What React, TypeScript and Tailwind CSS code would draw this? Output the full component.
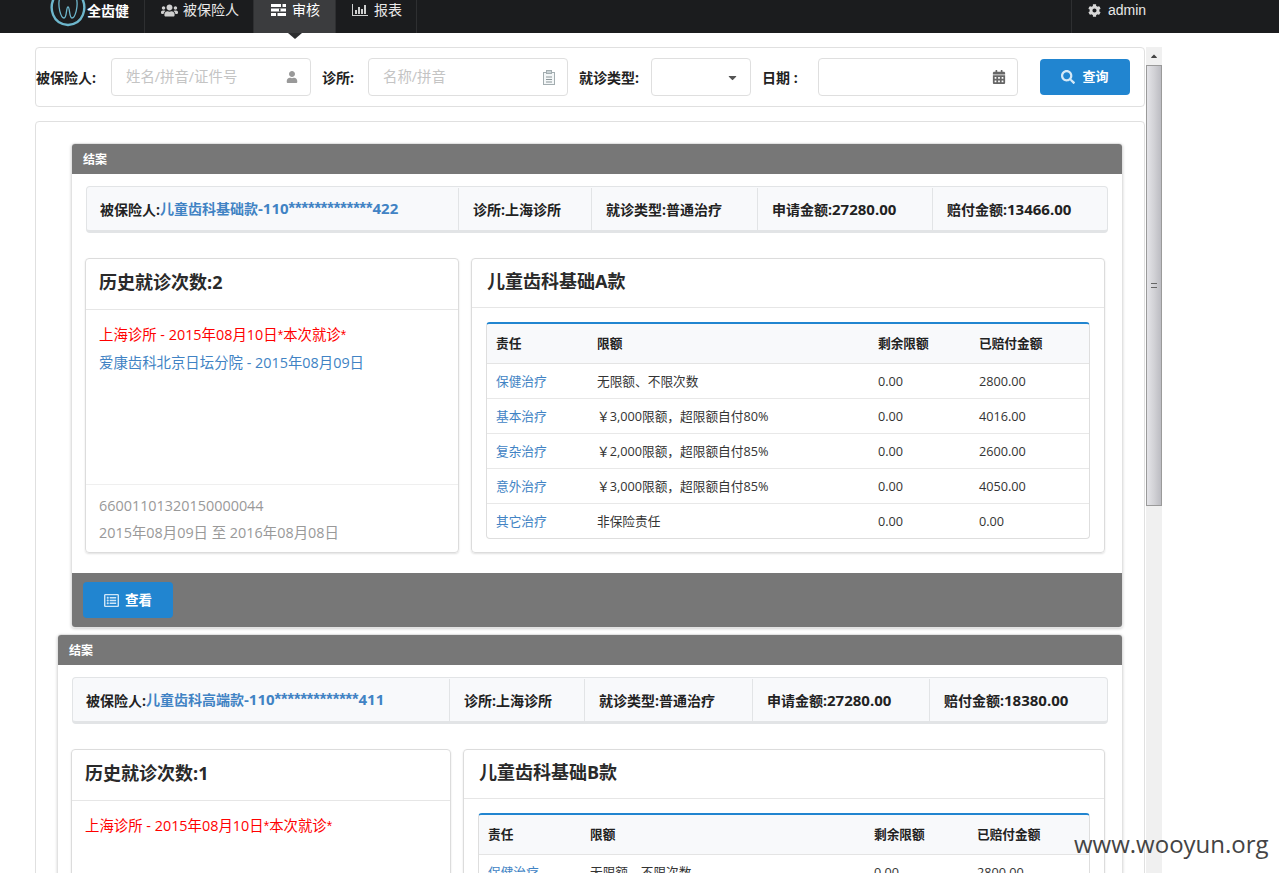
import { FaUser, FaUsers, FaCog, FaSearch, FaRegListAlt, FaCalendarAlt, FaCaretDown, FaCaretUp } from "react-icons/fa";

const font = { fontFamily: '"Open Sans", "Noto Sans CJK SC", sans-serif' };

function LogoMark() {
  return (
    <svg width="38" height="27" viewBox="0 0 38 27" fill="none" stroke="#6db6cc" className="absolute left-[49px] top-0">
      <path d="M5 -2 C0 8 3 24 19 25 C35 24 38 8 33 -2" strokeWidth="2.4" />
      <path d="M11 -3 C8 6 12 18 15 18 C18 18 17 7 19 7 C21 7 20 18 23 18 C26 18 30 6 27 -3" strokeWidth="1.3" />
    </svg>
  );
}

function TasksIcon() {
  return (
    <svg width="15" height="12" viewBox="0 0 15 12" fill="#fff" className="mr-[6px]">
      <rect x="0" y="0" width="15" height="3" />
      <rect x="0" y="4.5" width="15" height="3" />
      <rect x="0" y="9" width="15" height="3" />
      <rect x="8" y="4.5" width="1.5" height="3" fill="#3b3c3e" />
      <rect x="10" y="0" width="1.5" height="3" fill="#3b3c3e" />
      <rect x="5" y="9" width="1.5" height="3" fill="#3b3c3e" />
    </svg>
  );
}

function BarIcon() {
  return (
    <svg width="16" height="12" viewBox="0 0 16 12" fill="#cfcfcf" className="mr-[6px]">
      <rect x="0" y="0" width="1" height="12" />
      <rect x="0" y="11" width="16" height="1" />
      <rect x="3" y="6" width="2" height="4" />
      <rect x="6" y="3" width="2" height="7" />
      <rect x="9" y="5" width="2" height="5" />
      <rect x="12" y="1" width="2" height="9" />
    </svg>
  );
}

function ClipboardIcon() {
  return (
    <svg width="12" height="15" viewBox="0 0 12 15" fill="none" stroke="#a3adb0">
      <rect x="0.5" y="2.5" width="11" height="12" fill="#f4f7f8" />
      <rect x="3.5" y="0.5" width="5" height="3" fill="#c9d2d5" />
      <path d="M3 7h6M3 9.5h6M3 12h6" stroke="#8b9699" />
    </svg>
  );
}

function TopNav() {
  return (
    <div className="relative flex h-[33px] bg-[#1b1c1e] text-[14px] text-[#e8e8e8]">
      <div className="relative h-full w-[145px] border-r border-[#2e2f31]">
        <LogoMark />
        <span className="absolute left-[87px] top-0 text-[14px] font-bold leading-[21px] text-white">全齿健</span>
      </div>
      <div className="flex w-[108px] items-start pl-[16px] leading-[20px]">
        <FaUsers className="mr-[5px] mt-[2px] text-[17px] text-[#cfcfcf]" />
        被保险人
      </div>
      <div className="flex w-[83px] items-start border-x border-[#2e2f31] bg-[#3b3c3e] pl-[17px] leading-[20px] text-white">
        <span className="mt-[4px]">
          <TasksIcon />
        </span>
        审核
      </div>
      <div className="flex w-[81px] items-start border-r border-[#2e2f31] pl-[16px] leading-[20px]">
        <span className="mt-[4px]">
          <BarIcon />
        </span>
        报表
      </div>
      <div className="ml-auto flex w-[208px] items-start border-l border-[#2e2f31] pl-[16px] leading-[20px]">
        <FaCog className="mr-[7px] mt-[4px] text-[13px] text-[#d8d8d8]" />
        <span className="font-['Liberation_Sans']">admin</span>
      </div>
      <div className="absolute left-[288px] top-[33px] h-0 w-0 border-x-[7px] border-t-[6px] border-x-transparent border-t-[#2c2d2f]" />
    </div>
  );
}

function SearchPanel() {
  const input = "flex h-[38px] items-center justify-between rounded-[4px] border border-[#dfdfdf] bg-white";
  return (
    <div className="flex h-[60px] items-center rounded-[4px] border border-[#e0e0e0] text-[14px] font-bold text-[#222]">
      <span className="w-[75px] shrink-0">被保险人:</span>
      <div className={`${input} w-[200px] pl-[14px] pr-[12px]`}>
        <span className="text-[14.4px] font-normal text-[#c4c4c4]">姓名/拼音/证件号</span>
        <FaUser className="text-[12px] text-[#999]" />
      </div>
      <span className="ml-[11px] w-[46px] shrink-0">诊所:</span>
      <div className={`${input} w-[200px] pl-[14px] pr-[12px]`}>
        <span className="text-[14.4px] font-normal text-[#c4c4c4]">名称/拼音</span>
        <ClipboardIcon />
      </div>
      <span className="ml-[11px] w-[72px] shrink-0">就诊类型:</span>
      <div className={`${input} w-[100px] pr-[11px]`}>
        <span />
        <FaCaretDown className="text-[13px] text-[#555]" />
      </div>
      <span className="ml-[11px] w-[56px] shrink-0">日期 :</span>
      <div className={`${input} w-[200px] pr-[11px]`}>
        <span />
        <FaCalendarAlt className="text-[14px] text-[#666]" />
      </div>
      <button className="ml-[22px] flex h-[36px] w-[90px] items-center justify-center rounded-[4px] bg-[#2185d0] text-[13px] font-bold text-white">
        <FaSearch className="mr-[7px] text-[14px] text-[#d5e9f7]" />
        查询
      </button>
    </div>
  );
}

function Stars({ text, className }: { text: string; className: string }) {
  // 星号在原图里比正文窄很多，单独换字体
  const parts = text.split(/(\*+)/);
  return (
    <>
      {parts.map((s, i) =>
        s.startsWith("*") ? (
          <span key={i} className={`font-['Liberation_Sans'] ${className}`}>
            {s}
          </span>
        ) : (
          <span key={i}>{s}</span>
        ),
      )}
    </>
  );
}

type Row = { name: string; limit: string; left: string; paid: string };

type CaseProps = {
  className: string;
  infoCells: string[];
  person: string;
  personId: string;
  clinic: string;
  applied: string;
  paid: string;
  histCount: number;
  visits: { text: string; current?: boolean }[];
  footer?: string[];
  leftClass: string;
  productName: string;
  colClasses: string[];
  rows: Row[];
  showAction?: boolean;
};

function CaseCard(p: CaseProps) {
  const num = "text-[15px]";
  return (
    <div className={`overflow-hidden rounded-[4px] border border-[#e2e2e2] shadow-[0_1px_3px_rgba(0,0,0,0.18)] ${p.className}`}>
      <div className="flex h-[30px] items-center bg-[#777] pl-[11px] pt-[1px] text-[12px] font-bold text-white">结案</div>
      <div className="px-[14px]">
        <div className="mt-[12px] flex h-[47px] items-center rounded-[4px] border border-b-[3px] border-[#e2e4e6] bg-[#f8f9fb] pt-[1px] text-[14px] font-bold text-[#222]">
          <div className={`flex h-full items-center border-r border-[#e2e4e6] pl-[13px] ${p.infoCells[0]}`}>
            被保险人:
            <span className={`text-[#4183c4] ${num}`}>
              <span className="text-[14px]">{p.person}</span>-<Stars text={p.personId} className="text-[16.6px]" />
            </span>
          </div>
          <div className={`flex h-full items-center border-r border-[#e2e4e6] pl-[14px] ${p.infoCells[1]}`}>诊所:{p.clinic}</div>
          <div className={`flex h-full items-center border-r border-[#e2e4e6] pl-[14px] ${p.infoCells[2]}`}>就诊类型:普通治疗</div>
          <div className={`flex h-full items-center border-r border-[#e2e4e6] pl-[14px] ${p.infoCells[3]}`}>
            申请金额:<span className={num}>{p.applied}</span>
          </div>
          <div className="flex h-full flex-1 items-center pl-[14px]">
            赔付金额:<span className={num}>{p.paid}</span>
          </div>
        </div>
        <div className="-ml-[1px] mt-[25px] flex items-stretch pr-[3px]">
          <div className={`flex h-[295px] shrink-0 flex-col rounded-[4px] border border-[#dcdcdc] shadow-[0_1px_2px_rgba(0,0,0,0.12)] ${p.leftClass}`}>
            <div className="flex h-[51px] shrink-0 items-center border-b border-[#e6e6e6] pb-[4px] pl-[13px] text-[18px] font-bold text-[#2a2a2a]">
              历史就诊次数:{p.histCount}
            </div>
            <div className="flex-1 px-[13px] pt-[11px] text-[14.4px] leading-[27px]">
              {p.visits.map((v) => (
                <div key={v.text} className={v.current ? "text-[#ff0000]" : "text-[#4183c4]"}>
                  <Stars text={v.text} className="text-[14px]" />
                </div>
              ))}
            </div>
            {p.footer && (
              <div className="h-[68px] border-t border-[#efefef] px-[13px] pt-[7px] text-[14.4px] leading-[27px] text-[#999]">
                {p.footer.map((t) => (
                  <div key={t}>{t}</div>
                ))}
              </div>
            )}
          </div>
          <div className="ml-[12px] h-[295px] min-w-0 flex-1 rounded-[4px] border border-[#dcdcdc] shadow-[0_1px_2px_rgba(0,0,0,0.12)]">
            <div className="flex h-[49px] items-center border-b border-[#e6e6e6] pb-[4px] pl-[15px] text-[18px] font-bold text-[#2a2a2a]">
              {p.productName}
            </div>
            <div className="px-[14px] pt-[14px]">
              <div className="overflow-hidden rounded-[4px] border border-t-2 border-[#dedede] border-t-[#2185d0]">
                <table className="w-full table-fixed text-left text-[12.7px] text-[#333]">
                  <colgroup>
                    {p.colClasses.map((c) => (
                      <col key={c} className={c} />
                    ))}
                  </colgroup>
                  <thead>
                    <tr className="h-[39px] border-b border-[#e4e4e4] bg-[#f8f9fb] text-[#222]">
                      <th className="pl-[9px] pt-[1px] font-bold">责任</th>
                      <th className="pl-[9px] pt-[1px] font-bold">限额</th>
                      <th className="pl-[9px] pt-[1px] font-bold">剩余限额</th>
                      <th className="pl-[9px] pt-[1px] font-bold">已赔付金额</th>
                    </tr>
                  </thead>
                  <tbody>
                    {p.rows.map((r) => (
                      <tr key={r.name} className="h-[35px] border-b border-[#e8e8e8] last:border-b-0">
                        <td className="pl-[9px] pt-[2px] text-[#4183c4]">{r.name}</td>
                        <td className="pl-[9px] pt-[2px]">{r.limit}</td>
                        <td className="pl-[9px] pt-[2px]">{r.left}</td>
                        <td className="pl-[9px] pt-[2px]">{r.paid}</td>
                      </tr>
                    ))}
                  </tbody>
                </table>
              </div>
            </div>
          </div>
        </div>
      </div>
      {p.showAction && (
        <div className="mt-[20px] flex h-[54px] items-center bg-[#777] pl-[11px]">
          <button className="flex h-[36px] w-[90px] items-center justify-center rounded-[4px] bg-[#2185d0] text-[13.5px] font-bold text-white">
            <FaRegListAlt className="mr-[6px] text-[15px] text-[#cfe6f7]" />
            查看
          </button>
        </div>
      )}
    </div>
  );
}

const rowsA: Row[] = [
  { name: "保健治疗", limit: "无限额、不限次数", left: "0.00", paid: "2800.00" },
  { name: "基本治疗", limit: "￥3,000限额，超限额自付80%", left: "0.00", paid: "4016.00" },
  { name: "复杂治疗", limit: "￥2,000限额，超限额自付85%", left: "0.00", paid: "2600.00" },
  { name: "意外治疗", limit: "￥3,000限额，超限额自付85%", left: "0.00", paid: "4050.00" },
  { name: "其它治疗", limit: "非保险责任", left: "0.00", paid: "0.00" },
];

function Scrollbar() {
  return (
    <div className="ml-[1px] flex h-[826px] w-[16px] shrink-0 flex-col bg-[#f0f0f0]">
      <div className="flex h-[18px] items-center justify-center">
        <FaCaretUp className="text-[10px] text-[#444]" />
      </div>
      <div className="flex h-[441px] items-center justify-center border border-[#9a9a9a] bg-gradient-to-r from-[#e4e4e8] via-[#d2d2d6] to-[#bcbcc2]">
        <div className="h-[5px] w-[6px] border-y border-[#666]" />
      </div>
    </div>
  );
}

export default function App() {
  return (
    <div className="relative h-[873px] w-[1279px] overflow-hidden bg-white" style={font}>
      <TopNav />
      <div className="flex pl-[35px] pt-[14px]">
        <div className="w-[1110px] shrink-0">
          <SearchPanel />
          <div className="mt-[14px] h-[760px] overflow-hidden rounded-t-[4px] border border-[#e0e0e0] pr-[21px] pt-[21px]">
            <CaseCard
              className="ml-[35px]"
              infoCells={["w-[372px]", "w-[133px]", "w-[166px]", "w-[175px]"]}
              person="儿童齿科基础款"
              personId="110*************422"
              clinic="上海诊所"
              applied="27280.00"
              paid="13466.00"
              histCount={2}
              visits={[
                { text: "上海诊所 - 2015年08月10日*本次就诊*", current: true },
                { text: "爱康齿科北京日坛分院 - 2015年08月09日" },
              ]}
              footer={["66001101320150000044", "2015年08月09日 至 2016年08月08日"]}
              leftClass="w-[374px]"
              productName="儿童齿科基础A款"
              colClasses={["w-[101px]", "w-[281px]", "w-[101px]", "w-[121px]"]}
              rows={rowsA}
              showAction
            />
            <CaseCard
              className="ml-[21px] mt-[6px]"
              infoCells={["w-[377px]", "w-[135px]", "w-[168px]", "w-[177px]"]}
              person="儿童齿科高端款"
              personId="110*************411"
              clinic="上海诊所"
              applied="27280.00"
              paid="18380.00"
              histCount={1}
              visits={[{ text: "上海诊所 - 2015年08月10日*本次就诊*", current: true }]}
              leftClass="w-[380px]"
              productName="儿童齿科基础B款"
              colClasses={["w-[102px]", "w-[284px]", "w-[103px]", "w-[124px]"]}
              rows={rowsA.slice(0, 1)}
            />
          </div>
        </div>
        <Scrollbar />
      </div>
      <div className="absolute left-[1074px] top-[828px] text-[24px] leading-[32px] text-[#444]">www.wooyun.org</div>
    </div>
  );
}
